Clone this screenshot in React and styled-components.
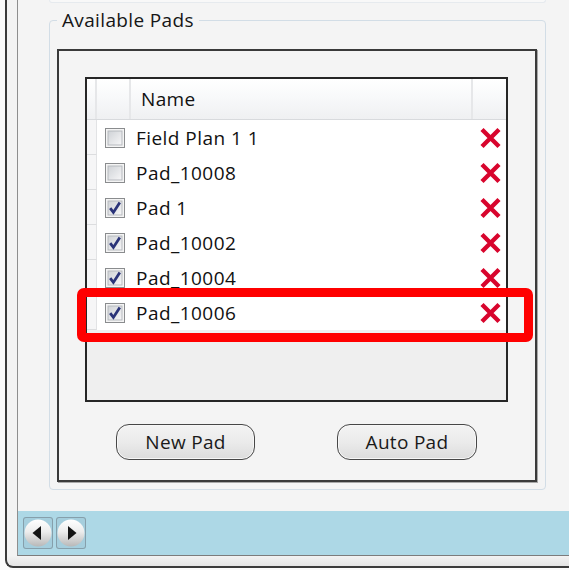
import styled, { createGlobalStyle } from "styled-components";

const GlobalStyle = createGlobalStyle`
 html, body {
  margin: 0;
  padding: 0;
  background: #fafafa;
 }
 body {
  font-family: "Open Sans", "Noto Sans", "Liberation Sans", sans-serif;
 }
`;

const pads = [
 { id: 1, name: "Field Plan 1 1", checked: false },
 { id: 2, name: "Pad_10008", checked: false },
 { id: 3, name: "Pad 1", checked: true },
 { id: 4, name: "Pad_10002", checked: true },
 { id: 5, name: "Pad_10004", checked: true },
 { id: 6, name: "Pad_10006", checked: true },
];

//checkbox drawn like the old windows one
const CheckIcon = ({ checked }) => (
 <svg width="20" height="20" viewBox="0 0 20 20">
  <defs>
   <linearGradient id="cbFill" x1="0" y1="0" x2="1" y2="1">
    <stop offset="0" stopColor="#cfd2d6" />
    <stop offset="1" stopColor="#f7f7f8" />
   </linearGradient>
  </defs>
  <rect x="0.5" y="0.5" width="19" height="19" fill="#f4f4f4" stroke="#8a8c8e" />
  <rect x="3" y="3" width="14" height="14" fill="url(#cbFill)" stroke="#b6b9be" />
  {checked && (
   <path
    d="M5.2 10.2 L8.4 14.4 L14.8 4.6"
    fill="none"
    stroke="#2b3479"
    strokeWidth="2.8"
    strokeLinejoin="miter"
   />
  )}
 </svg>
);

const DeleteIcon = () => (
 <svg width="23" height="22" viewBox="0 0 23 22">
  <path d="M3 2.5 L20 19.5 M20 2.5 L3 19.5" stroke="#d8052d" strokeWidth="4.4" />
 </svg>
);

const NavIcon = ({ dir }) => (
 <svg width="28" height="28" viewBox="0 0 28 28">
  <defs>
   <linearGradient id={`nav${dir}`} x1="0" y1="0" x2="0" y2="1">
    <stop offset="0" stopColor="#ffffff" />
    <stop offset="0.45" stopColor="#ededed" />
    <stop offset="1" stopColor="#b8b8b8" />
   </linearGradient>
  </defs>
  <circle cx="14" cy="14" r="13.5" fill={`url(#nav${dir})`} />
  {dir === "left" ? (
   <path d="M8.5 14 L17 7 L17 21 Z" fill="#141414" />
  ) : (
   <path d="M19.5 14 L11 7 L11 21 Z" fill="#141414" />
  )}
 </svg>
);

const App = () => {
 return (
  <Window>
   <GlobalStyle />
   <OuterFrame>
    <InnerFrame>
     <Body>
      <PrevGroupEdge />
      <GroupBox>
       <Legend>Available Pads</Legend>
       <ListFrame>
        <DataGrid>
         <HeaderRow>
          <HeaderCell />
          <HeaderCell />
          <HeaderCell $pad={10}>Name</HeaderCell>
          <HeaderCell />
         </HeaderRow>
         {pads.map((pad) => (
          <Row key={pad.id}>
           <RowHeader />
           <CheckCell>
            <CheckIcon checked={pad.checked} />
           </CheckCell>
           <NameCell>{pad.name}</NameCell>
           <DeleteCell>
            <DeleteIcon />
           </DeleteCell>
          </Row>
         ))}
        </DataGrid>
        <ButtonRow>
         <PadButton $w={139}>New Pad</PadButton>
         <PadButton $w={140}>Auto Pad</PadButton>
        </ButtonRow>
       </ListFrame>
      </GroupBox>
     </Body>
     <NavBar>
      <NavButton>
       <NavIcon dir="left" />
      </NavButton>
      <NavButton>
       <NavIcon dir="right" />
      </NavButton>
     </NavBar>
    </InnerFrame>
   </OuterFrame>
   <Highlight />
  </Window>
 );
};

const Window = styled.div`
 position: relative;
 width: 569px;
 height: 570px;
 overflow: hidden;
`;

const OuterFrame = styled.div`
 box-sizing: border-box;
 margin-left: 5px;
 width: 620px;
 height: 568px;
 padding: 0 0 10px 10px;
 border-left: 2px solid #3a3a3a;
 border-bottom: 2px solid #3a3a3a;
 border-bottom-left-radius: 8px;
 background: linear-gradient(
  to bottom,
  #f3f3f3 0,
  #f3f3f3 556px,
  #f1f1f1 557px,
  #e3e3e3 100%
 );
`;

const InnerFrame = styled.div`
 box-sizing: border-box;
 height: 100%;
 display: flex;
 flex-direction: column;
 border-left: 1px solid #8e8e8e;
 border-bottom: 1px solid #7c7c7c;
 background: #f4f4f4;
`;

const Body = styled.div`
 flex: 1;
 padding-left: 31px;
`;

// bottom of the group box above, just peeking in
const PrevGroupEdge = styled.div`
 box-sizing: border-box;
 width: 497px;
 height: 3px;
 border: 1px solid #e6eaee;
 border-top: none;
 border-radius: 0 0 3px 3px;
 background: #f8f8f8;
 margin-bottom: 5px;
`;

const GroupBox = styled.fieldset`
 box-sizing: border-box;
 width: 497px;
 margin: 0;
 padding: 0 7px 7px 7px;
 border: 1px solid #d2dde6;
 border-radius: 4px;
`;

const Legend = styled.legend`
 padding: 0 5px;
 font-size: 19px;
 letter-spacing: 0.35px;
 line-height: 24px;
 color: #161616;
`;

const ListFrame = styled.div`
 box-sizing: border-box;
 width: 480px;
 height: 433px;
 margin-top: 17px;
 padding: 26px 27px 0 26px;
 border: 2px solid #3a3a3a;
 box-shadow: 1px 1px 0 #a8a8a8;
 background: #f4f4f4;
`;

const DataGrid = styled.div`
 box-sizing: border-box;
 height: 325px;
 border: 2px solid #262626;
 background: #efefef;
 display: flex;
 flex-direction: column;
`;

const columns = "10px 34px 1fr 33px";

const HeaderRow = styled.div`
 display: grid;
 grid-template-columns: ${columns};
 height: 41px;
 box-sizing: border-box;
 border-bottom: 1px solid #d8dadd;
 background: linear-gradient(to bottom, #ffffff 0%, #f8f9fa 45%, #eff0f2 100%);
`;

const HeaderCell = styled.div`
 display: flex;
 align-items: center;
 padding-left: ${(p) => p.$pad || 0}px;
 font-size: 19px;
 letter-spacing: 0.35px;
 color: #111;
 border-right: 2px solid #e6e7e9;

 &:last-child {
  border-right: none;
 }
`;

const Row = styled.div`
 display: grid;
 grid-template-columns: ${columns};
 height: 35px;
 background: #ffffff;
`;

const RowHeader = styled.div`
 box-sizing: border-box;
 background: #f6f6f7;
 border-right: 1px solid #e2e3e5;
 border-bottom: 1px solid #dcdddf;
`;

const CheckCell = styled.div`
 display: flex;
 align-items: center;
 justify-content: center;
 padding-left: 1px;
`;

const NameCell = styled.div`
 display: flex;
 align-items: center;
 padding-left: 5px;
 font-size: 19px;
 letter-spacing: 0.45px;
 color: #111;
 white-space: nowrap;
`;

const DeleteCell = styled.div`
 display: flex;
 align-items: center;
 justify-content: center;
 padding-left: 2px;
`;

const ButtonRow = styled.div`
 display: flex;
 justify-content: center;
 gap: 82px;
 margin-top: 22px;
`;

const PadButton = styled.button`
 box-sizing: border-box;
 width: ${(p) => p.$w}px;
 height: 36px;
 padding: 0;
 border: 1px solid #474747;
 border-radius: 13px;
 box-shadow: inset 0 0 0 1px #f7f7f7;
 background: linear-gradient(to bottom, #f3f3f3 0%, #ebebeb 50%, #dcdcdc 100%);
 font-family: inherit;
 font-size: 19px;
 letter-spacing: 0.3px;
 color: #1a1a1a;
 cursor: pointer;
`;

const NavBar = styled.div`
 height: 44px;
 box-sizing: border-box;
 display: flex;
 align-items: flex-start;
 gap: 3px;
 padding: 6px 0 0 5px;
 background: #add8e6;
`;

const NavButton = styled.div`
 box-sizing: border-box;
 width: 30px;
 height: 32px;
 display: flex;
 align-items: center;
 justify-content: center;
 border: 1px solid rgba(110, 120, 130, 0.55);
 border-radius: 3px;
 background: rgba(160, 200, 215, 0.6);
`;

// red marker drawn over the screenshot
const Highlight = styled.div`
 position: absolute;
 left: 77px;
 top: 288px;
 width: 456px;
 height: 54px;
 box-sizing: border-box;
 border: 9px solid #ff0000;
 border-radius: 7px;
 pointer-events: none;
`;

export default App;
